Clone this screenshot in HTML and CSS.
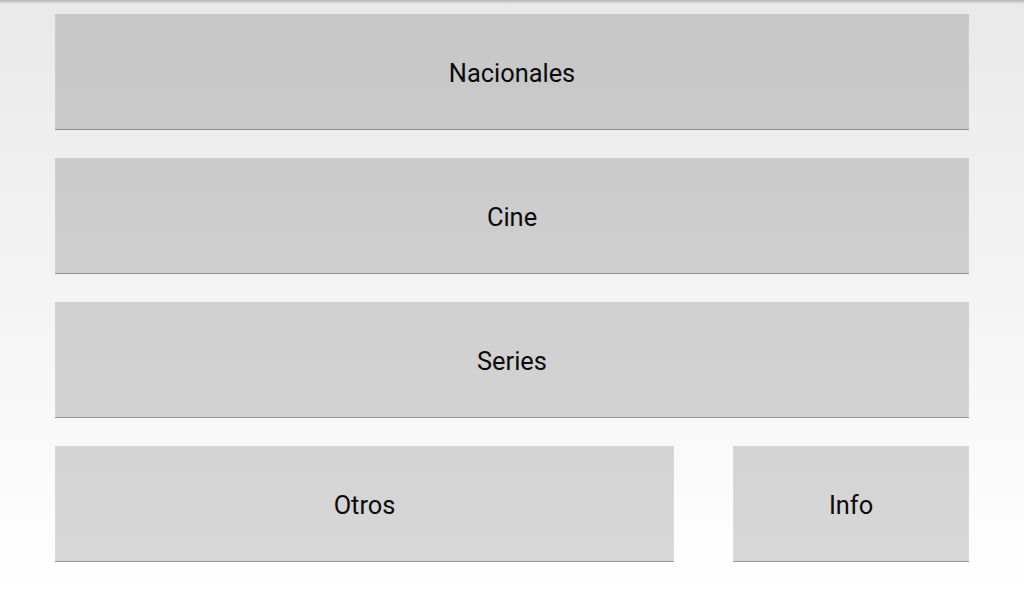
FILE: index.html
```html
<!DOCTYPE html>
<html>
<head>
<meta charset="utf-8">
<link rel="stylesheet" href="styles.css">
</head>
<body>
<div class="shadow"></div>
<main class="menu">
  <button class="btn">Nacionales</button>
  <button class="btn">Cine</button>
  <button class="btn">Series</button>
  <div class="row">
    <button class="btn otros">Otros</button>
    <button class="btn info">Info</button>
  </div>
</main>
</body>
</html>
```
FILE: styles.css
```css
html, body {
  margin: 0;
  padding: 0;
  width: 1024px;
  height: 600px;
  overflow: hidden;
}
body {
  background: linear-gradient(to bottom, #e9e9e9 0%, #ffffff 100%);
  font-family: Roboto, "Noto Sans", sans-serif;
  position: relative;
}
.shadow {
  position: absolute;
  left: 0; top: 0; right: 0;
  height: 4px;
  background: linear-gradient(to bottom, #b4b4b4, rgba(180,180,180,0));
}
.menu {
  display: flex;
  flex-direction: column;
  gap: 28px;
  padding: 14px 55px 0 55px;
}
.btn {
  box-sizing: border-box;
  height: 116px;
  width: 100%;
  border: none;
  border-bottom: 1px solid rgba(0,0,0,0.3);
  background: rgba(0,0,0,0.15);
  box-shadow: inset 1px 0 0 rgba(255,255,255,0.1), inset -1px 0 0 rgba(255,255,255,0.1);
  font-family: Roboto, "Noto Sans", sans-serif;
  font-size: 25.4px;
  color: #0a0a0a;
  padding: 2px 0 0 0;
  margin: 0;
}
.row {
  display: flex;
  gap: 59px;
}
.otros { width: 619px; flex: none; }
.info { width: 236px; flex: none; }
```
